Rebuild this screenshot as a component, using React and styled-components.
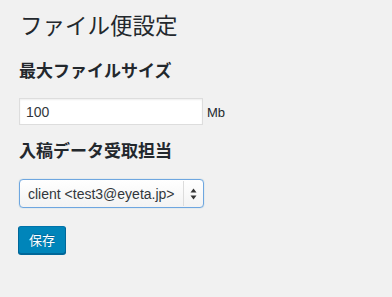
import styled, { createGlobalStyle } from 'styled-components';

const GlobalStyle = createGlobalStyle`
  html, body {
    margin: 0;
    padding: 0;
    background: #f1f1f1;
  }
  body {
    font-family: "Liberation Sans", "Noto Sans CJK JP", sans-serif;
    font-size: 13px;
    color: #23282d;
  }
`;

function App() {
  return (
    <Wrap>
      <GlobalStyle />
      <Title>ファイル便設定</Title>

      <SectionTitle>最大ファイルサイズ</SectionTitle>
      <FieldRow>
        <TextInput type="text" defaultValue="100" />
        <Unit>Mb</Unit>
      </FieldRow>

      <SectionTitle $top={14}>入稿データ受取担当</SectionTitle>
      <SelectBox>
        <Select defaultValue="client">
          <option value="client">client &lt;test3@eyeta.jp&gt;</option>
        </Select>
        <ArrowBox>
          <svg width="7" height="12" viewBox="0 0 7 12">
            <path d="M3.5 0.5 L6.5 4.5 L0.5 4.5 Z" fill="#333" />
            <path d="M3.5 11.5 L6.5 7.5 L0.5 7.5 Z" fill="#333" />
          </svg>
        </ArrowBox>
      </SelectBox>

      <SaveButton>保存</SaveButton>
    </Wrap>
  );
}

export default App;

const Wrap = styled.div`
  padding: 9px 20px 20px 19px;
  display: flex;
  flex-direction: column;
  align-items: flex-start;
`

const Title = styled.h1`
  margin: 0 0 0 1px;
  font-size: 22.5px;
  font-weight: 400;
  line-height: 30px;
  font-family: "Noto Sans CJK JP", sans-serif;
  color: #23282d;
`

const SectionTitle = styled.h2`
  margin: ${(props) => props.$top || 20}px 0 0 0;
  font-size: 17px;
  font-weight: 700;
  line-height: 22px;
  font-family: "Noto Sans CJK JP", sans-serif;
  color: #23282d;
`

const FieldRow = styled.div`
  margin-top: 17px;
  display: flex;
  align-items: center;
  gap: 4px;
`

const TextInput = styled.input`
  box-sizing: border-box;
  width: 184px;
  height: 27px;
  margin: 0;
  padding: 0 6px;
  border: 1px solid #dddddd;
  background: #ffffff;
  box-shadow: inset 0 1px 2px rgba(0, 0, 0, 0.07);
  font-family: "Liberation Sans", sans-serif;
  font-size: 14px;
  color: #32373c;
  outline: none;
`

const Unit = styled.span`
  font-size: 13px;
  color: #23282d;
  padding-top: 2px;
`

const SelectBox = styled.div`
  box-sizing: border-box;
  margin-top: 18px;
  width: 185px;
  height: 29px;
  display: flex;
  align-items: stretch;
  border: 1px solid #6ea6e0;
  border-radius: 4px;
  background: linear-gradient(#ffffff, #f3f3f3);
  box-shadow: 0 0 1px rgba(30, 140, 190, 0.5);
`

const Select = styled.select`
  flex: 1;
  min-width: 0;
  appearance: none;
  -webkit-appearance: none;
  border: none;
  background: transparent;
  padding: 0 0 0 8px;
  font-family: "Liberation Sans", sans-serif;
  font-size: 14px;
  color: #32373c;
  outline: none;
`

const ArrowBox = styled.div`
  width: 19px;
  display: flex;
  align-items: center;
  justify-content: center;
  border-left: 1px solid #dcdcdc;
  margin: 1px 0;
`

const SaveButton = styled.button`
  margin-top: 18px;
  margin-left: -1px;
  height: 28px;
  padding: 0 10px 1px;
  border: 1px solid #0073aa;
  border-color: #0073aa #006799 #006799;
  border-radius: 3px;
  background: #0085ba;
  box-shadow: 0 1px 0 #006799;
  color: #ffffff;
  font-family: "Noto Sans CJK JP", sans-serif;
  font-size: 13px;
  line-height: 26px;
  text-shadow: 0 -1px 1px #006799;
  cursor: pointer;
`
